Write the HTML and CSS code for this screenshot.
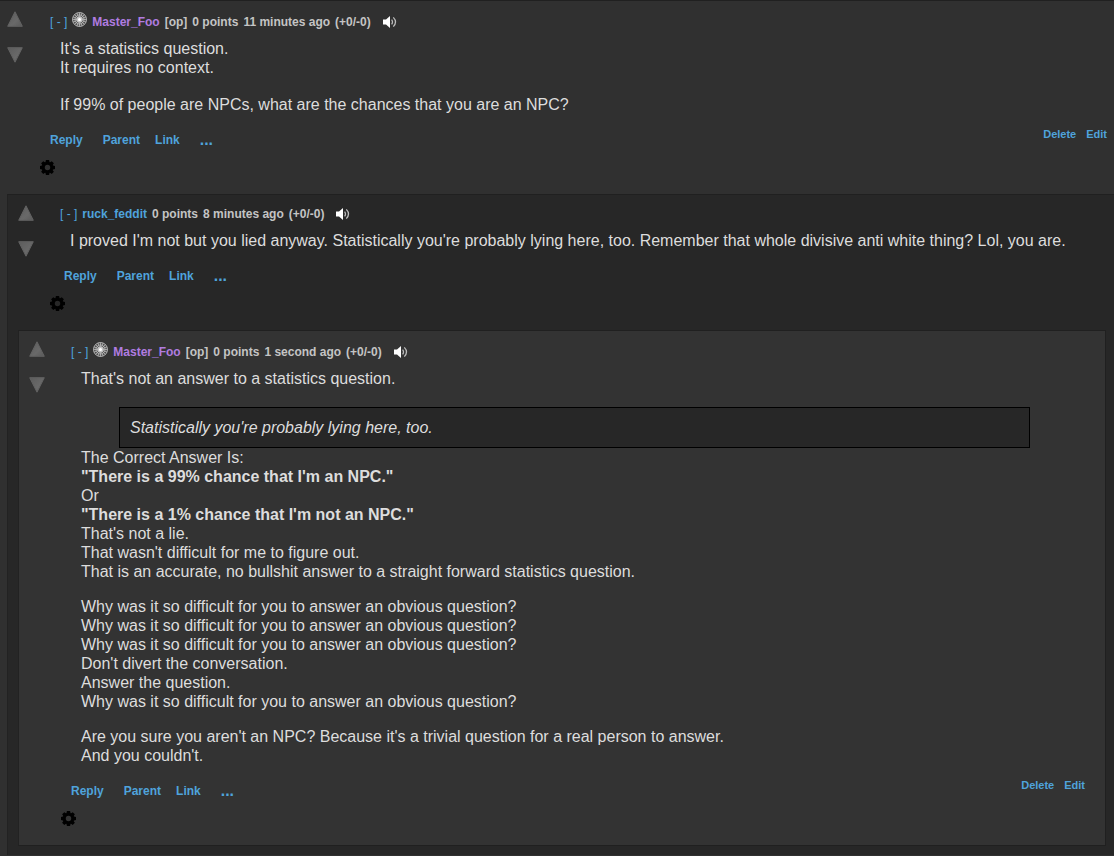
FILE: index.html
```
<!DOCTYPE html>
<html lang="en">
<head>
    <meta charset="utf-8">
    <title>Comments</title>
    <link rel="stylesheet" href="styles.css">
</head>
<body>
    <!-- shared icons -->
    <svg class="sprite" aria-hidden="true">
        <defs>
            <linearGradient id="shade" x1="0" y1="0" x2="1" y2="1">
                <stop offset="0" stop-color="#5c5c5c"/>
                <stop offset="0.6" stop-color="#696969"/>
                <stop offset="1" stop-color="#5a5a5a"/>
            </linearGradient>
        </defs>
        <symbol id="up" viewBox="0 0 16 16">
            <path d="M8 .8 15.3 15.3H.7z" fill="url(#shade)" stroke="#626262" stroke-linejoin="round"/>
        </symbol>
        <symbol id="down" viewBox="0 0 16 16">
            <path d="M8 15.2.7.7h14.6z" fill="url(#shade)" stroke="#626262" stroke-linejoin="round"/>
        </symbol>
        <symbol id="avatar" viewBox="0 0 15 15">
            <circle cx="7.5" cy="7.5" r="7" fill="#4a4a4a" stroke="#b0b0b0"/>
            <g fill="none" stroke="#c8c8c8" stroke-width=".7">
                <circle cx="7.5" cy="7.5" r="4.6"/>
                <path d="M7.5.5v14M.5 7.5h14M2.5 2.5l10 10M12.5 2.5l-10 10M4.8 1l5.4 13M10.2 1 4.8 14M1 4.8l13 5.4M1 10.2l13-5.4"/>
            </g>
            <circle cx="7.5" cy="7.5" r="3" fill="#c4c4c4"/>
            <circle cx="7.5" cy="7.5" r="1.5" fill="#fff"/>
        </symbol>
        <symbol id="speaker" viewBox="0 0 14 14">
            <path d="M0 4.500h3L7 1v12L3 9.500H0z" fill="#fff"/>
            <path d="M8.600 4.600q1.800 2.400 0 4.800M10.300 2.400q4.400 4.600 0 9.200" fill="none" stroke="#bbb" stroke-width="1.300"/>
        </symbol>
        <symbol id="gear" viewBox="0 0 16 16">
            <g fill="#000">
                <path d="M6.300 0h3.400l.6 3H5.700zM6.300 16h3.400l.6-3H5.700zM0 6.300v3.400l3 .6V5.700zM16 6.300v3.400l-3 .6V5.700z"/>
                <path d="M1.200 3.500 3.500 1.200 6 3 3 6zM14.800 3.500 12.500 1.200 10 3l3 3zM1.200 12.500l2.300 2.300L6 13l-3-3zM14.800 12.500l-2.300 2.300L10 13l3-3z"/>
            </g>
            <circle cx="8" cy="8" r="4.500" fill="none" stroke="#000" stroke-width="3.200"/>
        </symbol>
    </svg>

    <div class="comment">
        <div class="row">
            <div class="votes">
                <button aria-label="Upvote"><svg><use href="#up"/></svg></button>
                <button aria-label="Downvote"><svg><use href="#down"/></svg></button>
            </div>
            <div class="entry">
                <div class="tagline">
                    <a class="expand" href="#">[ - ]</a>
                    <svg class="avatar"><use href="#avatar"/></svg>
                    <a class="author op" href="#">Master_Foo</a>
                    <span>[op]</span>
                    <span>0 points</span>
                    <span>11 minutes ago</span>
                    <span>(+0/-0)</span>
                    <button class="speak" aria-label="Read aloud"><svg><use href="#speaker"/></svg></button>
                </div>
                <div class="text">
                    <p>It's a statistics question.<br>It requires no context.</p>
                    <p>If 99% of people are NPCs, what are the chances that you are an NPC?</p>
                </div>
                <div class="buttons">
                    <a href="#">Reply</a>
                    <a class="parent" href="#">Parent</a>
                    <a href="#">Link</a>
                    <a class="more" href="#">...</a>
                    <span class="own"><a href="#">Delete</a><a href="#">Edit</a></span>
                </div>
                <button class="settings" aria-label="Settings"><svg><use href="#gear"/></svg></button>
            </div>
        </div>

        <div class="comment child odd">
            <div class="row">
                <div class="votes">
                    <button aria-label="Upvote"><svg><use href="#up"/></svg></button>
                    <button aria-label="Downvote"><svg><use href="#down"/></svg></button>
                </div>
                <div class="entry">
                    <div class="tagline">
                        <a class="expand" href="#">[ - ]</a>
                        <a class="author" href="#">ruck_feddit</a>
                        <span>0 points</span>
                        <span>8 minutes ago</span>
                        <span>(+0/-0)</span>
                        <button class="speak" aria-label="Read aloud"><svg><use href="#speaker"/></svg></button>
                    </div>
                    <div class="text">
                        <p>I proved I'm not but you lied anyway. Statistically you're probably lying here, too. Remember that whole divisive anti white thing? Lol, you are.</p>
                    </div>
                    <div class="buttons guest">
                        <a href="#">Reply</a>
                        <a class="parent" href="#">Parent</a>
                        <a href="#">Link</a>
                        <a class="more" href="#">...</a>
                    </div>
                    <button class="settings" aria-label="Settings"><svg><use href="#gear"/></svg></button>
                </div>
            </div>

            <div class="comment child even">
                <div class="row">
                    <div class="votes">
                        <button aria-label="Upvote"><svg><use href="#up"/></svg></button>
                        <button aria-label="Downvote"><svg><use href="#down"/></svg></button>
                    </div>
                    <div class="entry">
                        <div class="tagline">
                            <a class="expand" href="#">[ - ]</a>
                            <svg class="avatar"><use href="#avatar"/></svg>
                            <a class="author op" href="#">Master_Foo</a>
                            <span>[op]</span>
                            <span>0 points</span>
                            <span>1 second ago</span>
                            <span>(+0/-0)</span>
                            <button class="speak" aria-label="Read aloud"><svg><use href="#speaker"/></svg></button>
                        </div>
                        <div class="text">
                            <p>That's not an answer to a statistics question.</p>
                            <blockquote>Statistically you're probably lying here, too.</blockquote>
                            <p>The Correct Answer Is:<br>
                            <strong>"There is a 99% chance that I'm an NPC."</strong><br>
                            Or<br>
                            <strong>"There is a 1% chance that I'm not an NPC."</strong><br>
                            That's not a lie.<br>
                            That wasn't difficult for me to figure out.<br>
                            That is an accurate, no bullshit answer to a straight forward statistics question.</p>
                            <p>Why was it so difficult for you to answer an obvious question?<br>
                            Why was it so difficult for you to answer an obvious question?<br>
                            Why was it so difficult for you to answer an obvious question?<br>
                            Don't divert the conversation.<br>
                            Answer the question.<br>
                            Why was it so difficult for you to answer an obvious question?</p>
                            <p>Are you sure you aren't an NPC? Because it's a trivial question for a real person to answer.<br>
                            And you couldn't.</p>
                        </div>
                        <div class="buttons">
                            <a href="#">Reply</a>
                            <a class="parent" href="#">Parent</a>
                            <a href="#">Link</a>
                            <a class="more" href="#">...</a>
                            <span class="own"><a href="#">Delete</a><a href="#">Edit</a></span>
                        </div>
                        <button class="settings" aria-label="Settings"><svg><use href="#gear"/></svg></button>
                    </div>
                </div>
            </div>
        </div>
    </div>
</body>
</html>
```
FILE: styles.css
```
body {
    margin: 0;
    background: #303030;
    color: #ddd;
    font-family: "Liberation Sans", Arial, sans-serif;
    font-size: 16px;
}
a { color: #4fa3dc; text-decoration: none; }
button { background: none; border: 0; padding: 0; cursor: pointer; }
svg { display: block; }
.sprite { position: absolute; width: 0; height: 0; }

.comment { border-top: 1px solid #202020; padding-left: 7px; }
.child { border-left: 1px solid #222; padding-left: 10px; }
.odd { background: #272727; padding-right: 8px; padding-bottom: 9px; }
.even { background: #333; border-right: 1px solid #202020; border-bottom: 1px solid #202020; }
.row { display: flex; padding: 10px 0 19px; }

.votes { width: 33px; display: flex; flex-direction: column; align-items: flex-start; gap: 20px; }
.child .votes { width: 32px; }
.votes svg { width: 16px; height: 16px; }

.entry { flex: 1; min-width: 0; }
.tagline {
    display: flex;
    align-items: flex-end;
    gap: 5px;
    margin-left: 10px;
    padding-top: 1px;
    font-size: 12px;
    font-weight: bold;
    line-height: 16px;
    color: #c4c4c4;
}
.expand { font-weight: normal; }
.avatar { width: 15px; height: 15px; margin-bottom: 3px; }
.op { color: #b07ce0; }
.speak { margin-left: 7px; }
.speak svg { width: 14px; height: 14px; margin-bottom: 1px; }

.text { margin: 9px 10px 0 20px; line-height: 19px; }
.text p { margin: 0; }
.text p + p { margin-top: 18px; }
.text blockquote ~ p + p { margin-top: 16px; }
blockquote {
    margin: 19px 65px 0 38px;
    padding: 10px;
    border: 1px solid #000;
    background: #272727;
    font-style: italic;
}

.buttons {
    display: flex;
    align-items: center;
    margin: 18px 7px 0 10px;
    font-size: 12px;
    font-weight: bold;
    line-height: 16px;
}
.buttons > a { margin-right: 20px; }
.buttons > .parent { margin-right: 15px; }
.buttons > .more { font-size: 16px; }
.guest { padding-left: 4px; }
.own { display: flex; align-self: flex-start; gap: 10px; margin-left: auto; margin-top: -5px; font-size: 11px; line-height: 14px; }
.even .own { margin-right: 13px; }
.settings { display: block; margin-top: 12px; }
.settings svg { width: 15px; height: 15px; }
```
